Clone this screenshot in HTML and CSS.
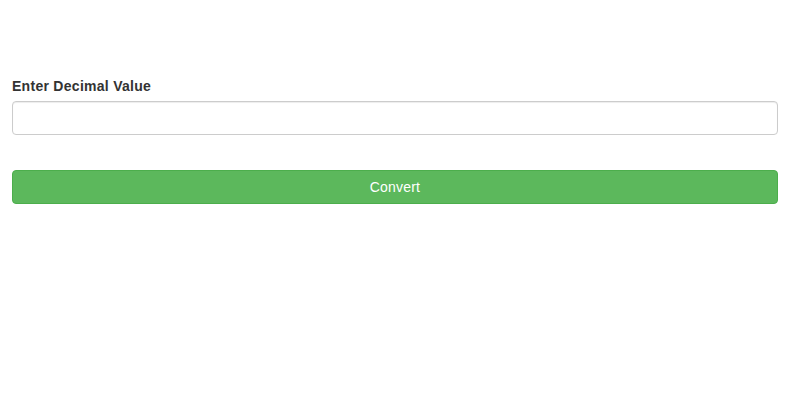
FILE: index.html
```html
<!DOCTYPE html>
<html>
<head>
<meta charset="utf-8">
<link rel="stylesheet" href="styles.css">
</head>
<body>
<div class="page">
  <form class="form">
    <div class="form-group">
      <label class="label" for="dec">Enter Decimal Value</label>
      <input class="input" id="dec" type="text">
    </div>
    <button class="btn" type="button">Convert</button>
  </form>
</div>
</body>
</html>
```
FILE: styles.css
```css
html, body {
  margin: 0;
  padding: 0;
  background: #fff;
}
body {
  font-family: "Liberation Sans", Arial, sans-serif;
  font-size: 14px;
  line-height: 20px;
  color: #333;
}
.page {
  padding: 76px 11px 0 12px;
}
.form {
  display: flex;
  flex-direction: column;
}
.form-group {
  display: flex;
  flex-direction: column;
  margin-bottom: 35px;
}
.label {
  font-weight: bold;
  margin-bottom: 5px;
  display: block;
  letter-spacing: 0.28px;
}
.input {
  box-sizing: border-box;
  height: 34px;
  width: 100%;
  border: 1px solid #ccc;
  border-radius: 4px;
  box-shadow: inset 0 1px 1px rgba(0,0,0,.075);
  padding: 6px 12px;
  font: inherit;
  margin: 0;
}
.btn {
  box-sizing: border-box;
  height: 34px;
  width: 100%;
  background: #5cb85c;
  border: 1px solid #4cae4c;
  border-radius: 4px;
  color: #fff;
  font-family: "Liberation Sans", Arial, sans-serif;
  font-size: 14px;
  line-height: 20px;
  letter-spacing: 0.2px;
  padding: 6px 12px;
  margin: 0;
}
```
